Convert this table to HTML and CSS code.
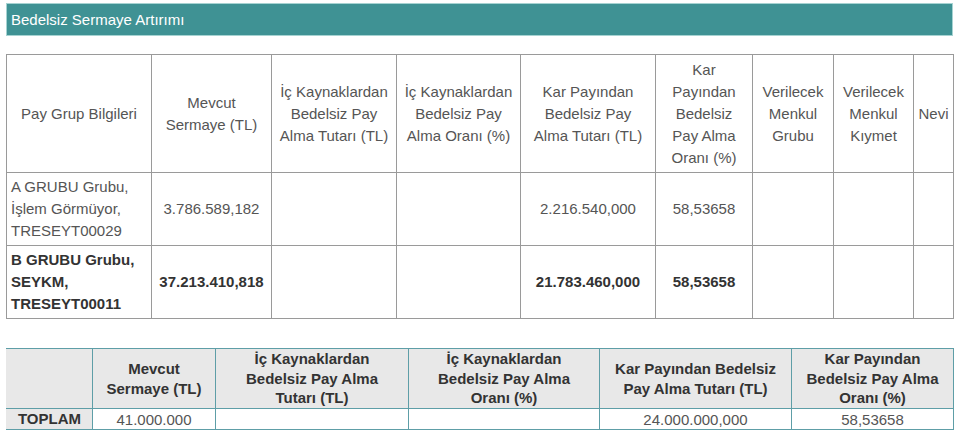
FILE: index.html
```html
<!DOCTYPE html>
<html lang="tr">
<head>
<meta charset="utf-8">
<link rel="stylesheet" href="styles.css">
</head>
<body>
<div class="page">
  <div class="title-bar">Bedelsiz Sermaye Artırımı</div>

  <table class="grid">
    <colgroup>
      <col class="c1"><col class="c2"><col class="c3"><col class="c4"><col class="c5"><col class="c6"><col class="c7"><col class="c8"><col class="c9">
    </colgroup>
    <tr class="head">
      <td>Pay Grup Bilgileri</td>
      <td>Mevcut Sermaye (TL)</td>
      <td>İç Kaynaklardan Bedelsiz Pay Alma Tutarı (TL)</td>
      <td>İç Kaynaklardan Bedelsiz Pay Alma Oranı (%)</td>
      <td>Kar Payından Bedelsiz Pay Alma Tutarı (TL)</td>
      <td>Kar Payından Bedelsiz Pay Alma Oranı (%)</td>
      <td>Verilecek Menkul Grubu</td>
      <td>Verilecek Menkul Kıymet</td>
      <td class="narrow">Nevi</td>
    </tr>
    <tr class="row">
      <td class="name">A GRUBU Grubu, İşlem Görmüyor, TRESEYT00029</td>
      <td>3.786.589,182</td>
      <td></td>
      <td></td>
      <td>2.216.540,000</td>
      <td>58,53658</td>
      <td></td>
      <td></td>
      <td class="narrow"></td>
    </tr>
    <tr class="row bold">
      <td class="name">B GRUBU Grubu, SEYKM, TRESEYT00011</td>
      <td>37.213.410,818</td>
      <td></td>
      <td></td>
      <td>21.783.460,000</td>
      <td>58,53658</td>
      <td></td>
      <td></td>
      <td class="narrow"></td>
    </tr>
  </table>

  <table class="total">
    <colgroup>
      <col class="t1"><col class="t2"><col class="t3"><col class="t4"><col class="t5"><col class="t6">
    </colgroup>
    <tr class="thead">
      <th class="blank"></th>
      <th>Mevcut Sermaye (TL)</th>
      <th>İç Kaynaklardan Bedelsiz Pay Alma Tutarı (TL)</th>
      <th>İç Kaynaklardan Bedelsiz Pay Alma Oranı (%)</th>
      <th>Kar Payından Bedelsiz Pay Alma Tutarı (TL)</th>
      <th>Kar Payından Bedelsiz Pay Alma Oranı (%)</th>
    </tr>
    <tr class="trow">
      <th class="label">TOPLAM</th>
      <td>41.000.000</td>
      <td></td>
      <td></td>
      <td>24.000.000,000</td>
      <td>58,53658</td>
    </tr>
  </table>
</div>
</body>
</html>
```

FILE: styles.css
```css
html, body {
  margin: 0;
  padding: 0;
  background: #ffffff;
}

body {
  font-family: "Liberation Sans", Arial, sans-serif;
  font-size: 15px;
  color: #555555;
}

.page {
  padding: 3px 7px 0 6px;
}

.title-bar {
  box-sizing: border-box;
  height: 33px;
  background: #3f9294;
  border: 1px solid #a6d3d2;
  color: #ffffff;
  font-size: 15px;
  line-height: 32px;
  padding-left: 4px;
}

.grid {
  margin-top: 18px;
  width: 947px;
  border-collapse: collapse;
  table-layout: fixed;
  border: 1px solid #9a9a9a;
}

.c1 { width: 145px; }
.c2 { width: 120px; }
.c3 { width: 125px; }
.c4 { width: 124px; }
.c5 { width: 135px; }
.c6 { width: 97px; }
.c7 { width: 81px; }
.c8 { width: 80px; }
.c9 { width: 40px; }

.grid td {
  border: 1px solid #9a9a9a;
  padding: 3px 7px;
  line-height: 22px;
  text-align: center;
  vertical-align: middle;
  color: #555555;
}

.grid td.narrow {
  padding: 3px 2px;
}

.grid .head {
  height: 118px;
}

.grid .row {
  height: 73px;
}

.grid td.name {
  text-align: left;
  padding-left: 4px;
  padding-right: 4px;
}

.grid .bold td {
  font-weight: bold;
  color: #333333;
}

.total {
  margin-top: 29px;
  width: 947px;
  border-collapse: collapse;
  table-layout: fixed;
}

.t1 { width: 86px; }
.t2 { width: 123px; }
.t3 { width: 193px; }
.t4 { width: 191px; }
.t5 { width: 192px; }
.t6 { width: 162px; }

.total th,
.total td {
  border: 1px solid #5e9ea7;
  text-align: center;
  vertical-align: middle;
}

.total th {
  background: #e8e8e8;
  color: #333333;
  font-weight: bold;
  line-height: 19.5px;
  padding: 0 12px;
}

.total .thead {
  height: 60px;
}

.total .blank,
.total .label {
  border-left-color: #e8e8e8;
  padding: 0 2px;
}

.total td {
  color: #555555;
  line-height: 19px;
  padding: 1px 4px 0;
}

.total .trow {
  height: 21px;
}
```
